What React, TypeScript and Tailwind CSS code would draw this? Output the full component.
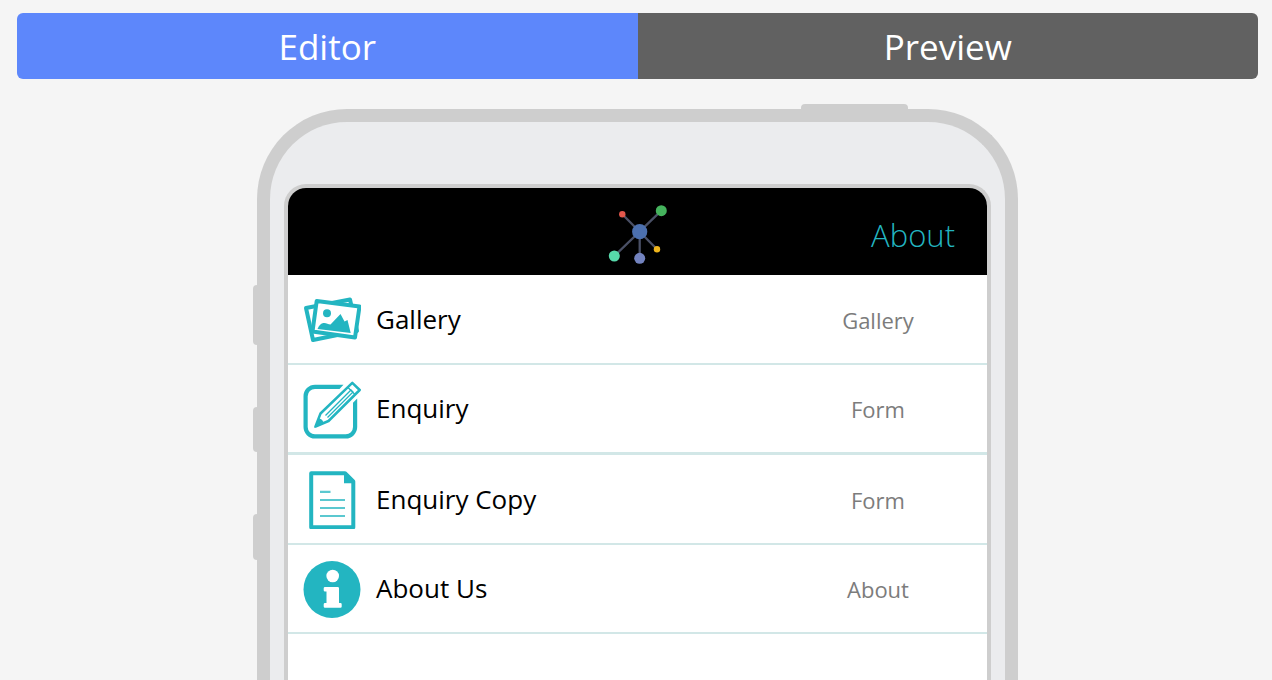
import type { ReactNode } from 'react';
import { clsx } from 'clsx';

interface MenuItem {
  title: string;
  type: string;
  icon: ReactNode;
  className: string;
}

function GalleryIcon() {
  return (
    <svg viewBox="0 0 58 58" className="size-[58px] shrink-0" aria-hidden="true">
      <g stroke="#23b5c1" strokeWidth="4" strokeLinejoin="round">
        <path d="M3 17 L47 8.500 L54 40 L10 49 Z" fill="#fff" />
        <path d="M13.700 10 L56.500 15.500 L52 46.500 L9.500 40.500 Z" fill="#fff" />
      </g>
      <circle cx="24" cy="22.300" r="4" fill="#23b5c1" />
      <path
        d="M14.500 38 C16 34.500 18 32 20.500 32 C23 31.500 25 33.500 27.500 33.500 L37.500 23 L41.500 30.500 L44.500 29 L47.700 42 Z"
        fill="#23b5c1"
      />
    </svg>
  );
}

function EditIcon() {
  return (
    <svg viewBox="0 0 58 58" className="size-[58px] shrink-0" aria-hidden="true">
      <path
        d="M40.500 3.700 H12 A11.500 11.500 0 0 0 .5 15.200 V46 A11.500 11.500 0 0 0 12 57.500 H42.700 A11.500 11.500 0 0 0 54.200 46 V17.500 L50 21.700 V46 A7.300 7.300 0 0 1 42.700 53.300 H12 A7.300 7.300 0 0 1 4.700 46 V15.200 A7.300 7.300 0 0 1 12 7.900 H36.500 Z"
        fill="#23b5c1"
      />
      <path
        d="M49.300 1.800 L56.700 9 L25.500 40 L12.500 45.500 L17.500 32.500 Z"
        fill="#fff"
        stroke="#23b5c1"
        strokeWidth="2.500"
        strokeLinejoin="round"
      />
      <path d="M16 37.500 L11 47 L20.500 42.500 Q20 38 16 37.500 Z" fill="#23b5c1" />
      <path
        d="M22.500 34.500 L48 9 L50 11 L24.500 36.500 M45 6.500 L52 13.500"
        fill="none"
        stroke="#23b5c1"
        strokeWidth="1.300"
      />
    </svg>
  );
}

function DocumentIcon() {
  return (
    <svg viewBox="0 0 58 58" className="size-[58px] shrink-0" aria-hidden="true">
      <path
        d="M8.200 2.200 H42 L50.300 10.500 V56.200 H8.200 Z"
        fill="#fff"
        stroke="#23b5c1"
        strokeWidth="4"
        strokeLinejoin="round"
      />
      <path d="M41 2 V12.300 H51 Z" fill="#23b5c1" />
      <path
        d="M17 20.800 H27.500 M17 29 H42 M17 37 H42 M17 45 H42"
        stroke="#5bc8d0"
        strokeWidth="2.200"
      />
    </svg>
  );
}

function InfoIcon() {
  return (
    <svg viewBox="0 0 58 58" className="size-[58px] shrink-0" aria-hidden="true">
      <circle cx="29" cy="28.500" r="28.500" fill="#23b5c1" />
      <circle cx="29.700" cy="15" r="6.300" fill="#fff" />
      <path
        d="M22 26 H34.700 Q36 26 36 27.300 V42 H37.500 Q38.700 42 38.700 43.300 V45.500 Q38.700 46.700 37.500 46.700 H22 Q20.700 46.700 20.700 45.500 V43.300 Q20.700 42 22 42 H23.500 V30.500 H22 Q20.700 30.500 20.700 29.300 V27.300 Q20.700 26 22 26 Z"
        fill="#fff"
      />
    </svg>
  );
}

function Logo() {
  return (
    <svg
      viewBox="-2 -5 61 65"
      className="h-[65px] w-[61px]"
      role="img"
      aria-label="Home"
    >
      <g stroke="#4a5066" strokeWidth="2.300">
        <path d="M13.300 10.300 L48 45.300 M52.300 6.700 L5.300 52 M30.700 27.700 V54.300" />
      </g>
      <circle cx="13.300" cy="10.300" r="3.200" fill="#e2574c" />
      <circle cx="52.300" cy="6.700" r="5.500" fill="#45b35d" />
      <circle cx="48" cy="45.300" r="3.200" fill="#efb51c" />
      <circle cx="5.300" cy="52" r="5.500" fill="#57d9ab" />
      <circle cx="30.700" cy="54.300" r="5.500" fill="#7383bf" />
      <circle cx="30.700" cy="27.700" r="7.600" fill="#4c70af" />
    </svg>
  );
}

const items: MenuItem[] = [
  {
    title: 'Gallery',
    type: 'Gallery',
    icon: <GalleryIcon />,
    className: 'h-[90px] border-b-2',
  },
  {
    title: 'Enquiry',
    type: 'Form',
    icon: <EditIcon />,
    className: 'h-[90px] border-b-3',
  },
  {
    title: 'Enquiry Copy',
    type: 'Form',
    icon: <DocumentIcon />,
    className: 'h-[90px] border-b-2',
  },
  {
    title: 'About Us',
    type: 'About',
    icon: <InfoIcon />,
    className: 'h-[89px] border-b-2',
  },
];

function ModeTabs() {
  return (
    <div role="tablist" className="flex h-[66px] overflow-hidden rounded-md">
      <button
        type="button"
        role="tab"
        aria-selected="true"
        className="flex-1 bg-[#5d87fb] pt-0.5 text-[35px] text-white"
      >
        Editor
      </button>
      <button
        type="button"
        role="tab"
        aria-selected="false"
        className="flex-1 bg-[#616161] pt-0.5 text-[35px] text-white"
      >
        Preview
      </button>
    </div>
  );
}

function AppScreen() {
  return (
    <div className="flex flex-1 flex-col overflow-hidden rounded-t-[22px] border-4 border-b-0 border-[#cecece] bg-white">
      <header className="grid h-[87px] grid-cols-[1fr_61px_1fr] items-center bg-black">
        <span />
        <Logo />
        <a
          href="#about"
          className="justify-self-end pt-2 pr-8 text-[31px] font-light text-[#23b5c1]"
        >
          About
        </a>
      </header>
      <ul>
        {items.map((item) => (
          <li key={item.title} className={clsx('border-[#d2e7e7]', item.className)}>
            <button
              type="button"
              className="flex h-full w-full items-center gap-[15px] pl-[15px] text-left"
            >
              <span className="pt-0.5">{item.icon}</span>
              <span className="flex-1 text-[26px] text-black">{item.title}</span>
              <span className="w-[218px] pt-0.5 text-center text-[22px] text-[#7c7c7c]">
                {item.type}
              </span>
            </button>
          </li>
        ))}
      </ul>
    </div>
  );
}

function PhoneFrame({ children }: { children: ReactNode }) {
  return (
    <div className="relative mx-auto mt-[30px] flex w-full max-w-[761px] flex-1 flex-col">
      {/* hardware buttons */}
      <span className="absolute -top-[5px] right-[110px] h-3 w-[107px] rounded-t-sm bg-[#cecece]" />
      <span className="absolute top-[176px] -left-1 h-[60px] w-2 rounded-l-sm bg-[#cecece]" />
      <span className="absolute top-[298px] -left-1 h-[45px] w-2 rounded-l-sm bg-[#cecece]" />
      <span className="absolute top-[405px] -left-1 h-[46px] w-2 rounded-l-sm bg-[#cecece]" />
      <div className="relative flex flex-1 flex-col rounded-t-[90px] border-[13px] border-b-0 border-[#cecece] bg-[#ebecee] px-[14px] pt-[62px]">
        {children}
      </div>
    </div>
  );
}

export default function App() {
  return (
    <main className="flex min-h-screen flex-col bg-[#f5f5f5] pt-[13px] pr-[14px] pl-[17px] font-['Open_Sans','Noto_Sans',sans-serif]">
      <ModeTabs />
      <PhoneFrame>
        <AppScreen />
      </PhoneFrame>
    </main>
  );
}
